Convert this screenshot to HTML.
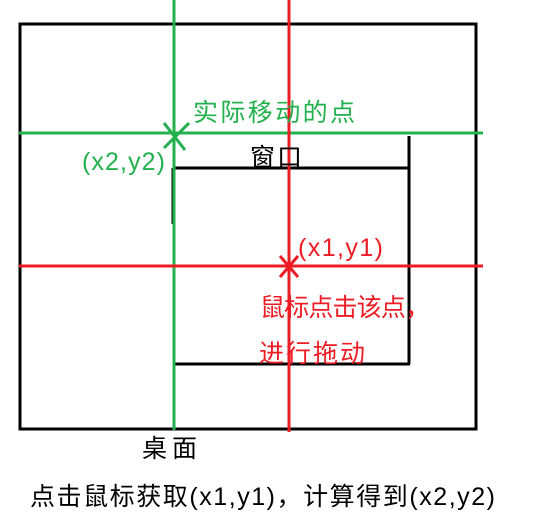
<!DOCTYPE html>
<html><head><meta charset="utf-8"><style>
body{margin:0;background:#fff;width:546px;height:519px;overflow:hidden}
svg{position:absolute;left:0;top:0}
text{font-family:"Liberation Sans","Noto Sans CJK SC",sans-serif}
</style></head><body>
<svg width="546" height="519" viewBox="0 0 546 519">
<rect x="20" y="24" width="456" height="405" fill="none" stroke="#000" stroke-width="3"/>
<path d="M174 168H410M409 136V364M174 364H410M173 168V224" stroke="#000" stroke-width="3" fill="none"/>
<path d="M174 0V430M19 133H483" stroke="#22b14c" stroke-width="3"/>
<path d="M289 0V432M19 266H483" stroke="#ed1c24" stroke-width="3"/>
<path d="M164 123L185 150M164 148L189 123" stroke="#22b14c" stroke-width="3"/>
<path d="M280 256L298 277M280 277L298 256" stroke="#ed1c24" stroke-width="3"/>
<text x="193" y="121" font-size="25" fill="#22b14c" textLength="162">实际移动的点</text>
<text x="82" y="170" font-size="25" fill="#22b14c" textLength="83">(x2,y2)</text>
<text x="250" y="166" font-size="25" fill="#000" textLength="52">窗口</text>
<text x="298" y="256" font-size="25" fill="#ed1c24" textLength="85">(x1,y1)</text>
<text x="260" y="316" font-size="25" fill="#ed1c24" textLength="170">鼠标点击该点，</text>
<text x="259" y="362" font-size="25" fill="#ed1c24" textLength="106">进行拖动</text>
<text x="142" y="457" font-size="25" fill="#000" textLength="55">桌面</text>
<text x="30" y="505" font-size="25" fill="#000" textLength="465">点击鼠标获取(x1,y1)，计算得到(x2,y2)</text>
</svg>
</body></html>
